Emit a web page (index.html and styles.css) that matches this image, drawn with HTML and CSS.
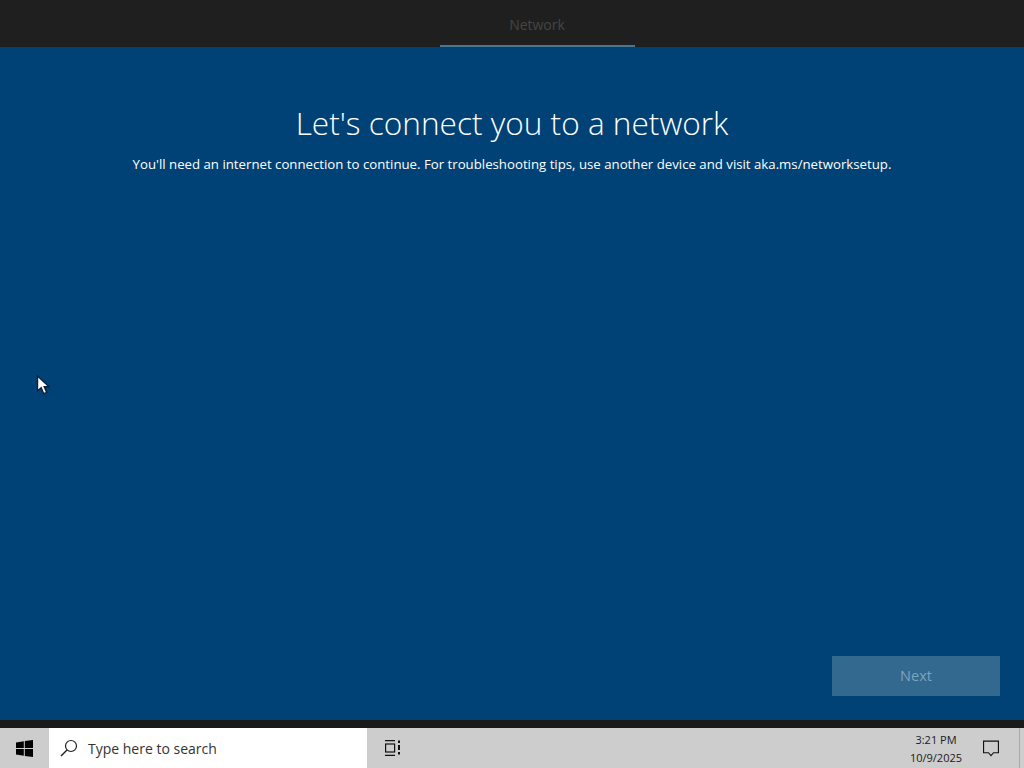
FILE: index.html
```html
<!DOCTYPE html>
<html lang="en">
<head>
<meta charset="utf-8">
<title>Network</title>
<link rel="stylesheet" href="styles.css">
</head>
<body>
<div class="screen">
  <header class="topbar">
    <div class="tab">Network</div>
  </header>
  <main class="main">
    <div class="intro">
      <h1 class="title">Let's connect you to a network</h1>
      <p class="subtitle">You'll need an internet connection to continue. For troubleshooting tips, use another device and visit aka.ms/networksetup.</p>
    </div>
    <div class="actions"><button class="next" disabled>Next</button></div>
    <svg class="cursor" width="14" height="21" viewBox="0 0 14 21"><path d="M1.500 1v15l3.700-3.300 2.500 6 3-1.300-2.500-5.700h4.800z" fill="#fff" stroke="#0a2238" stroke-width="1.400"/></svg>
  </main>
  <div class="strip"></div>
  <footer class="taskbar">
    <div class="start">
      <svg width="17" height="17" viewBox="0 0 17 17"><path fill="#000" d="M0 2.400 7.800 1.200v6.800H0zM8.800 1.100 17 0v8H8.800zM0 9h7.800v6.800L0 14.600zM8.800 9H17v8l-8.200-1.100z"/></svg>
    </div>
    <div class="search">
      <svg class="search-icon" width="18" height="18" viewBox="0 0 18 18"><circle cx="11" cy="7" r="5.500" fill="none" stroke="#222" stroke-width="1.200"/><path d="M7 11 1 17" stroke="#222" stroke-width="1.400"/></svg>
      <span class="search-text">Type here to search</span>
    </div>
    <div class="taskview">
      <svg width="17" height="16" viewBox="0 0 17 16"><g fill="none" stroke="#111" stroke-width="1.200"><path d="M1 .6h10M1 15.400h10"/><rect x="1.600" y="4" width="9" height="8"/></g><path fill="#111" d="M14 .5h2v2.500h-2zM14 5h2v5h-2zM14 12h2v2.500h-2z"/></svg>
    </div>
    <div class="tray">
      <div class="clock"><span>3:21 PM</span><span>10/9/2025</span></div>
      <div class="notify">
        <svg width="16" height="17" viewBox="0 0 17 17"><path d="M.6.6h15.800v12.400h-5.200L8.500 16l-2.700-3H.6z" fill="none" stroke="#111" stroke-width="1.200"/></svg>
      </div>
      <div class="show-desktop"></div>
    </div>
  </footer>
</div>
</body>
</html>
```
FILE: styles.css
```css
* { box-sizing: border-box; }
html, body { margin: 0; height: 100%; overflow: hidden; }
body { font-family: "Open Sans", "Noto Sans", "Liberation Sans", sans-serif; }
.screen { display: flex; flex-direction: column; width: 1024px; height: 768px; background: #004275; }
.topbar { height: 48px; background: #1f1f1f; display: flex; justify-content: center; border-bottom: 1px solid #004275; padding-left: 50px; }
.tab { width: 195px; height: 47px; display: flex; align-items: center; justify-content: center; font-size: 14px; color: #454545; border-bottom: 2px solid #4d7590; padding-top: 3px; }
.main { position: relative; flex: 1; display: flex; flex-direction: column; justify-content: space-between; background: #004275; }
.intro { display: flex; flex-direction: column; align-items: center; padding-top: 51px; }
.title { margin: 0; font-size: 31.600px; font-weight: 300; line-height: 48px; color: #fff; white-space: nowrap; }
.subtitle { margin: 7px 0 0; font-size: 13.230px; line-height: 20px; color: #fff; white-space: nowrap; }
.actions { display: flex; justify-content: flex-end; padding: 0 24px 24px 0; }
.next { width: 168px; height: 40px; border: 0; background: #33688f; color: #7da3bf; font: inherit; font-size: 14.500px; padding: 0 0 2px; }
.cursor { position: absolute; left: 36px; top: 327px; }
.strip { height: 8px; background: #1a1a1a; }
.taskbar { height: 40px; background: #cdcdcd; display: flex; align-items: stretch; }
.start { width: 48px; display: flex; align-items: center; justify-content: center; }
.search { width: 318px; margin-left: 1px; background: #fff; display: flex; align-items: center; padding-left: 11px; }
.search-icon { margin-right: 10px; }
.search-text { font-size: 14px; color: #333; }
.taskview { width: 48px; display: flex; align-items: center; justify-content: center; padding-left: 2px; }
.tray { flex: 1; display: flex; justify-content: flex-end; align-items: stretch; }
.clock { display: flex; flex-direction: column; align-items: center; justify-content: center; font-size: 11px; line-height: 18px; color: #1a1a1a; width: 60px; margin-right: 5px; padding-top: 1px; }
.notify { width: 48px; display: flex; align-items: center; justify-content: center; padding-right: 8px; }
.show-desktop { width: 5px; border-left: 1px solid #a8a8a8; }
```
